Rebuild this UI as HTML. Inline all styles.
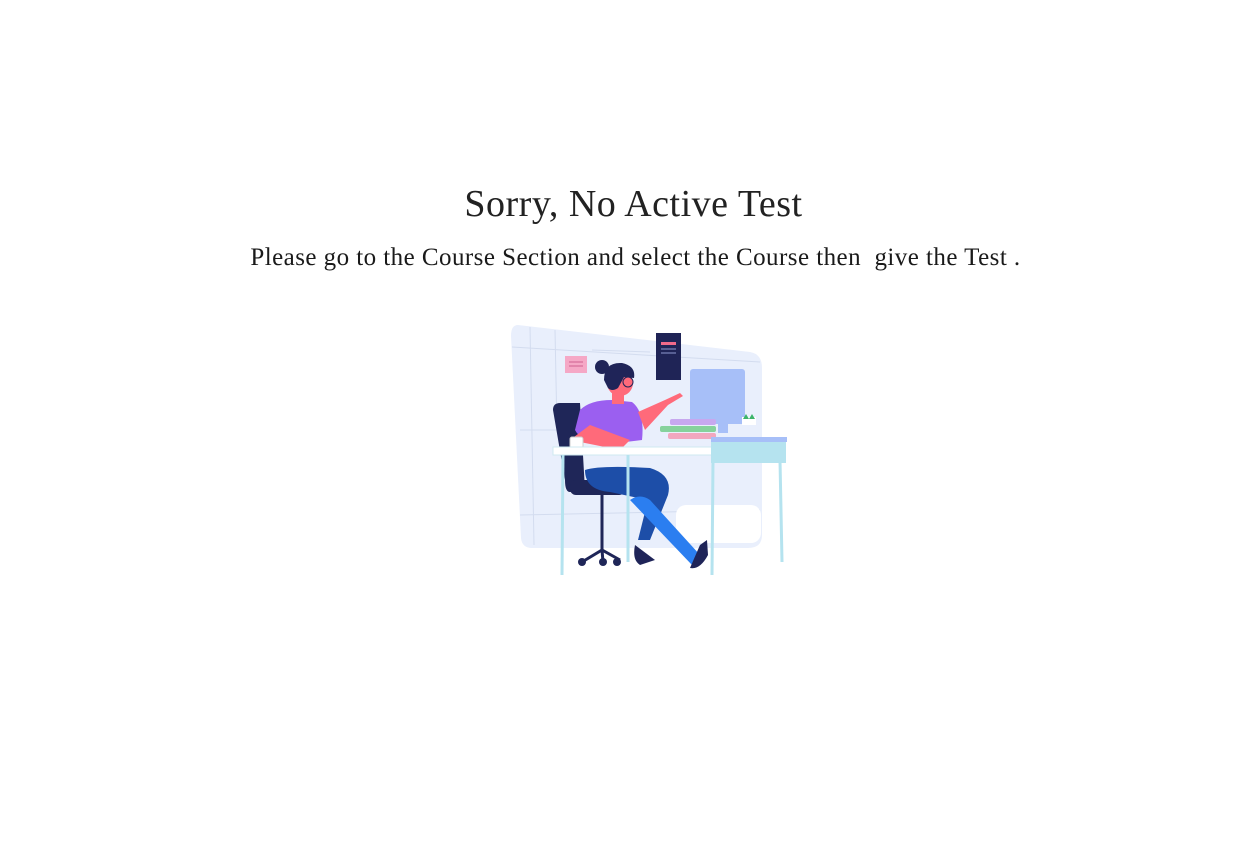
<!DOCTYPE html>
<html><head><meta charset="utf-8"><style>
html,body{margin:0;padding:0;background:#fff;width:1259px;height:866px;overflow:hidden}
.t{position:absolute;width:1259px;text-align:center;font-family:"Liberation Serif",serif;color:#222;white-space:nowrap}
#h{left:4px;top:182px;font-size:38px;letter-spacing:0.5px}
#p{left:6px;top:244px;font-size:25px;letter-spacing:0.45px;color:#1a1a1a}
svg{position:absolute;left:0;top:0}
</style></head><body>
<div class="t" id="h">Sorry, No Active Test</div>
<div class="t" id="p">Please go to the Course Section and select the Course then&nbsp; give the Test .</div>
<svg width="1259" height="866" viewBox="0 0 1259 866">
<path d="M518 325 L750 352 Q762 354 762 368 L762 535 Q762 548 748 548 L532 548 Q522 548 521 538 L511 336 Q511 325 518 325 Z" fill="#e9effc"/>
<g stroke="#d3dcef" stroke-width="1" fill="none">
<line x1="512" y1="347" x2="760" y2="362"/><line x1="530" y1="327" x2="534" y2="545"/>
<line x1="555" y1="330" x2="557" y2="430"/><line x1="520" y1="430" x2="560" y2="430"/>
<line x1="520" y1="515" x2="760" y2="510"/><line x1="592" y1="350" x2="650" y2="352"/>
</g>
<rect x="676" y="505" width="85" height="38" rx="10" fill="#fff"/>
<rect x="565" y="356" width="22" height="17" fill="#f5a8c6"/>
<line x1="569" y1="362" x2="583" y2="362" stroke="#d06090"/><line x1="569" y1="366" x2="583" y2="366" stroke="#d06090"/>
<rect x="656" y="333" width="25" height="47" fill="#1f2456"/>
<rect x="661" y="342" width="15" height="3" fill="#f06a8a"/>
<line x1="661" y1="349" x2="676" y2="349" stroke="#8f9ad0"/><line x1="661" y1="353" x2="676" y2="353" stroke="#8f9ad0"/>
<rect x="690" y="369" width="55" height="55" rx="3" fill="#a7bff8"/>
<rect x="718" y="393" width="10" height="40" fill="#a7bff8"/>
<path d="M742 417 h14 v8 h-14 z" fill="#fff"/><path d="M743 419 l3 -5 l3 5 l3 -5 l3 5z" fill="#3cb46a"/>
<path d="M553 410 Q553 403 560 403 L580 403 L585 490 L570 492 Q565 492 565 480 Z" fill="#1f2658"/>
<rect x="570" y="480" width="55" height="15" rx="6" fill="#1f2658"/>
<line x1="602" y1="495" x2="602" y2="550" stroke="#1f2658" stroke-width="3"/>
<path d="M582 562 L602 550 L620 560 M602 550 L603 562" stroke="#1f2658" stroke-width="3" fill="none"/>
<circle cx="582" cy="562" r="4" fill="#1f2658"/><circle cx="603" cy="562" r="4" fill="#1f2658"/><circle cx="617" cy="562" r="4" fill="#1f2658"/>
<path d="M580 410 Q590 400 612 400 L632 402 Q645 412 642 440 L600 445 Q580 440 575 430 Z" fill="#9b5ff0"/>
<path d="M570 440 L590 425 L630 440 L620 450 Z" fill="#ff6a7a"/>
<path d="M638 412 L665 400 L680 393 L683 396 L668 405 L645 430 Z" fill="#ff6a7a"/>
<rect x="612" y="388" width="12" height="16" fill="#ff6a7a"/>
<circle cx="620" cy="383" r="13" fill="#ff6a7a"/>
<path d="M604 380 Q604 362 622 363 Q636 366 634 378 L624 377 L618 388 Q612 392 608 388 Z" fill="#1f2458"/>
<circle cx="602" cy="367" r="7" fill="#1f2458"/>
<circle cx="628" cy="382" r="5" fill="none" stroke="#1f2458" stroke-width="1"/>
<rect x="570" y="437" width="13" height="11" rx="2" fill="#fff" stroke="#ccc"/>
<rect x="670" y="419" width="46" height="6" rx="2" fill="#c7a8ef"/>
<rect x="660" y="426" width="56" height="6" rx="2" fill="#86d29c"/>
<rect x="668" y="433" width="48" height="6" rx="2" fill="#f2a7bf"/>
<path d="M585 470 Q600 465 650 468 Q673 475 668 495 L650 540 L638 540 L648 500 L610 492 Q585 490 585 470Z" fill="#1d4ea8"/>
<path d="M630 500 Q640 493 650 500 L700 555 L692 565 Z" fill="#2b7ef0"/>
<path d="M635 545 L655 560 L640 565 Q632 560 635 545Z" fill="#1f2458"/>
<path d="M690 568 L700 545 L707 540 L708 555 Q700 570 690 568Z" fill="#1f2458"/>
<rect x="553" y="447" width="160" height="8" fill="#fff" stroke="#cfeaf1"/>
<rect x="711" y="437" width="75" height="26" fill="#b5e3ef"/>
<rect x="711" y="437" width="76" height="5" fill="#a7bff8"/>
<g stroke="#b5e3ef" stroke-width="3">
<line x1="563" y1="455" x2="562" y2="575"/><line x1="628" y1="455" x2="628" y2="562"/>
<line x1="713" y1="460" x2="712" y2="575"/><line x1="780" y1="460" x2="782" y2="562"/>
</g>
</svg>
</body></html>
